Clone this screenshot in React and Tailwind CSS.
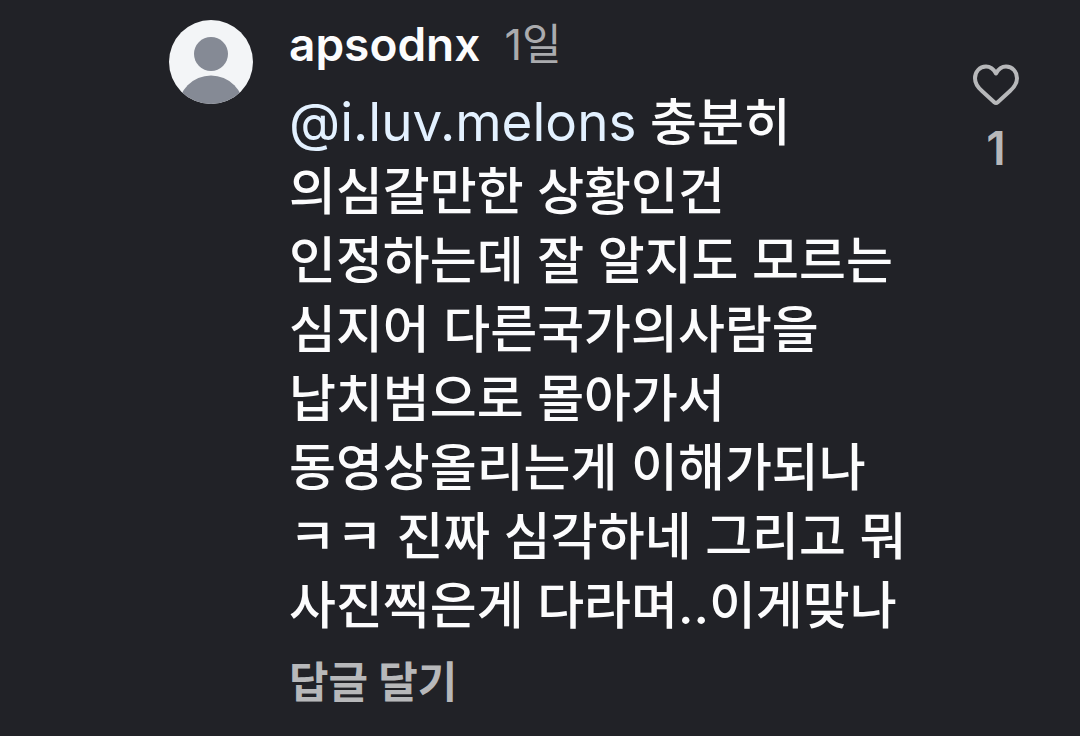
const comment = {
  user: "apsodnx",
  age: "1일",
  mention: "@i.luv.melons",
  likes: 1,
  lines: [
    "의심갈만한 상황인건",
    "인정하는데 잘 알지도 모르는",
    "심지어 다른국가의사람을",
    "납치범으로 몰아가서",
    "동영상올리는게 이해가되나",
    "ㅋㅋ 진짜 심각하네 그리고 뭐",
    "사진찍은게 다라며..이게맞나",
  ],
};

function Avatar() {
  return (
    <svg viewBox="0 0 84 84" className="mt-5 size-[84px] shrink-0 rounded-full" aria-hidden="true">
      <rect width="84" height="84" fill="#f3f5f7" />
      <circle cx="42" cy="34" r="17" fill="#858a95" />
      <circle cx="42" cy="88.5" r="33" fill="#858a95" />
    </svg>
  );
}

function HeartIcon() {
  return (
    <svg viewBox="0 0 48 42" className="h-[42px] w-12" fill="none" stroke="currentColor" strokeWidth="4" strokeLinejoin="round" aria-hidden="true">
      <path d="M24 9.5C21.5 5 18 2.6 14 2.6C7.5 2.6 3 7.8 3 14.2C3 19.5 6 23.5 10 27L22.3 38.2Q24 39.7 25.7 38.2L38 27C42 23.5 45 19.5 45 14.2C45 7.8 40.5 2.6 34 2.6C30 2.6 26.5 5 24 9.5Z" />
    </svg>
  );
}

export default function App() {
  return (
    <main className="min-h-screen bg-[#212227] font-['Inter','Noto_Sans_CJK_KR',sans-serif] text-[#fcfcfd]">
      <article className="flex pr-[60px] pb-5 pl-[169px]">
        <Avatar />
        <div className="ml-9 min-w-0 flex-1 pt-2">
          <header className="flex items-center gap-6 leading-[72px]">
            <a href="#" className="text-[46px] font-semibold">{comment.user}</a>
            <time className="text-[43px] text-[#aaabae]">{comment.age}</time>
          </header>
          <p className="mt-2 text-[51px] leading-[69px] font-medium">
            <a href="#" className="text-[53px] font-normal text-[#e3f1ff]">{comment.mention}</a> 충분히
            {comment.lines.map((line) => (
              <span key={line} className="block whitespace-nowrap">{line}</span>
            ))}
          </p>
          <button type="button" className="mt-3 text-[43px] leading-[60px] font-bold text-[#b7b8ba]">
            답글 달기
          </button>
        </div>
        <button type="button" aria-label="Like" className="mt-16 flex flex-col items-center gap-3 self-start text-[#b7b8ba]">
          <HeartIcon />
          <span className="text-[46px] leading-[60px] font-semibold">{comment.likes}</span>
        </button>
      </article>
    </main>
  );
}
